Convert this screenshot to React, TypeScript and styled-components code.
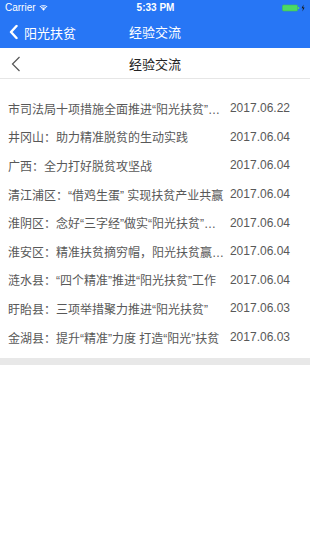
import styled, { createGlobalStyle } from 'styled-components';

const articles = [
  { id: 1, title: '市司法局十项措施全面推进“阳光扶贫”工作', date: '2017.06.22' },
  { id: 2, title: '井冈山：助力精准脱贫的生动实践', date: '2017.06.04' },
  { id: 3, title: '广西：全力打好脱贫攻坚战', date: '2017.06.04' },
  { id: 4, title: '清江浦区：“借鸡生蛋” 实现扶贫产业共赢', date: '2017.06.04' },
  { id: 5, title: '淮阴区：念好“三字经”做实“阳光扶贫”存量文章', date: '2017.06.04' },
  { id: 6, title: '淮安区：精准扶贫摘穷帽，阳光扶贫赢民心', date: '2017.06.04' },
  { id: 7, title: '涟水县：“四个精准”推进“阳光扶贫”工作', date: '2017.06.04' },
  { id: 8, title: '盱眙县：三项举措聚力推进“阳光扶贫”', date: '2017.06.03' },
  { id: 9, title: '金湖县：提升“精准”力度 打造“阳光”扶贫', date: '2017.06.03' },
];

export default function App() {
  return (
    <>
      <GlobalStyle />
      <Screen>
        <TopBar>
          <StatusBar>
            <Carrier>
              Carrier
              <svg width="9" height="7" viewBox="0 0 18 13">
                <path d="M9 13 L5.5 9 A5 5 0 0 1 12.5 9 Z" fill="#fff" />
                <path d="M3.3 6.8 A8 8 0 0 1 14.7 6.8 L13.2 8.3 A6 6 0 0 0 4.8 8.3 Z" fill="#fff" />
                <path d="M1 4.5 A11.5 11.5 0 0 1 17 4.5 L15.6 5.9 A9.5 9.5 0 0 0 2.4 5.9 Z" fill="#fff" />
              </svg>
            </Carrier>
            <Clock>5:33 PM</Clock>
            <Battery>
              <svg width="24" height="8" viewBox="0 0 24 8">
                <rect x="0.5" y="1" width="15" height="6" rx="1" fill="#4cd964" stroke="#3fbf55" strokeWidth="0.6" />
                <rect x="16" y="3" width="1.2" height="2" fill="#4cd964" />
                <path d="M21.5 0.5 L19.6 4.3 L21 4.3 L20.4 7.5 L22.6 3.5 L21.2 3.5 Z" fill="#1a1a1a" />
              </svg>
            </Battery>
          </StatusBar>
          <NavBar>
            <NavBack>
              <svg width="9" height="15" viewBox="0 0 9 15">
                <polyline points="7.5,1.5 2,7.5 7.5,13.5" fill="none" stroke="#fff" strokeWidth="2.4" strokeLinecap="round" strokeLinejoin="round" />
              </svg>
              阳光扶贫
            </NavBack>
            <NavTitle>经验交流</NavTitle>
          </NavBar>
        </TopBar>

        <PageHeader>
          <HeaderBack>
            <svg width="10" height="16" viewBox="0 0 10 16">
              <polyline points="8.5,1 1.5,8 8.5,15" fill="none" stroke="#555" strokeWidth="1.2" />
            </svg>
          </HeaderBack>
          <HeaderTitle>经验交流</HeaderTitle>
        </PageHeader>

        <List>
          {articles.map((item) => (
            <Row key={item.id}>
              <Title>{item.title}</Title>
              <DateText>{item.date}</DateText>
            </Row>
          ))}
        </List>

        <Divider />
      </Screen>
    </>
  );
}

const GlobalStyle = createGlobalStyle`
  html, body {
    margin: 0;
    padding: 0;
    background: #FFFFFF;
  }

  body {
    font-family: "Liberation Sans", "Noto Sans CJK SC", sans-serif;
  }
`;

const Screen = styled.div`
  width: 310px;
  min-height: 550px;
  background: #FFFFFF;
  display: flex;
  flex-direction: column;
`;

const TopBar = styled.div`
  background: #2776F5;
  color: #FFFFFF;
  height: 48px;
  display: flex;
  flex-direction: column;
`;

const StatusBar = styled.div`
  height: 15px;
  display: grid;
  grid-template-columns: 1fr auto 1fr;
  align-items: center;
  padding: 0 4px 0 5px;
  font-size: 10px;
`;

const Carrier = styled.div`
  display: flex;
  align-items: center;
  gap: 3px;
`;

const Clock = styled.div`
  font-weight: bold;
`;

const Battery = styled.div`
  display: flex;
  justify-content: flex-end;
`;

const NavBar = styled.div`
  flex: 1;
  position: relative;
  display: flex;
  align-items: center;
  justify-content: center;
`;

const NavBack = styled.div`
  position: absolute;
  left: 9px;
  top: 50%;
  transform: translateY(-50%);
  display: flex;
  align-items: center;
  gap: 6px;
  font-size: 13px;
`;

const NavTitle = styled.div`
  font-size: 13px;
`;

const PageHeader = styled.div`
  height: 30px;
  border-bottom: 1px solid #E6E6E6;
  position: relative;
  display: flex;
  align-items: center;
  justify-content: center;
`;

const HeaderBack = styled.div`
  position: absolute;
  left: 11px;
  top: 8px;
  display: flex;
`;

const HeaderTitle = styled.div`
  font-size: 13px;
  color: #222222;
`;

const List = styled.div`
  display: flex;
  flex-direction: column;
  padding-top: 15px;
`;

const Row = styled.div`
  height: 28.6px;
  display: flex;
  align-items: center;
  padding: 0 20px 0 8px;
  gap: 3px;
  font-size: 12px;
  color: #585858;
`;

const Title = styled.div`
  flex: 1;
  min-width: 0;
  white-space: nowrap;
  overflow: hidden;
  text-overflow: ellipsis;
`;

const DateText = styled.div`
  flex-shrink: 0;
  white-space: nowrap;
`;

const Divider = styled.div`
  height: 7px;
  background: #E8E8E8;
  margin-top: 7px;
`;
